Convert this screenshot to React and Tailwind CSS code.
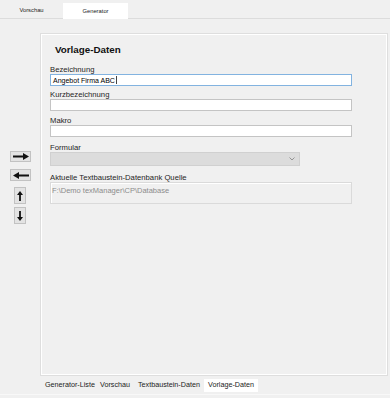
import React from 'react';

const font = { fontFamily: '"Liberation Sans", Arial, sans-serif' };

const ArrowRight = () => (
    <svg width="16" height="7" viewBox="0 0 16 7">
        <rect x="0" y="2.5" width="11" height="2" fill="#111" />
        <path d="M10 0 L16 3.5 L10 7 Z" fill="#111" />
    </svg>
);

const ArrowLeft = () => (
    <svg width="16" height="7" viewBox="0 0 16 7">
        <rect x="5" y="2.5" width="11" height="2" fill="#111" />
        <path d="M6 0 L0 3.5 L6 7 Z" fill="#111" />
    </svg>
);

const ArrowUp = () => (
    <svg width="6" height="10" viewBox="0 0 6 10">
        <rect x="2.1" y="3" width="1.8" height="7" fill="#111" />
        <path d="M0 4 L3 0 L6 4 Z" fill="#111" />
    </svg>
);

const ArrowDown = () => (
    <svg width="6" height="10" viewBox="0 0 6 10">
        <rect x="2.1" y="0" width="1.8" height="7" fill="#111" />
        <path d="M0 6 L3 10 L6 6 Z" fill="#111" />
    </svg>
);

const Label = ({ children, className = '' }) => (
    <div className={`h-[9px] leading-[9px] text-[7.7px] text-[#1e1e1e] whitespace-nowrap ${className}`}>{children}</div>
);

const TextBox = ({ value, focused }) => (
    <div className={`w-[302px] h-[12px] bg-white border flex items-center pl-[2px] text-[7px] text-black leading-none
        ${focused ? 'border-[#82b3e0]' : 'border-[#c4c4c4]'}`}>
        {value}
        {focused && <span className="inline-block w-px h-[8px] bg-[#444] ml-px" />}
    </div>
);

const App = () => {
    return (
        <div className="w-[390px] h-[398px] bg-[#f0f0f0] flex flex-col overflow-hidden" style={font}>
            {/* ── top tabs ── */}
            <div className="h-[19px] flex items-end border-b border-[#dcdcdc] shrink-0">
                <div className="w-[63px] h-[15px] flex items-center justify-center text-[5.8px] text-[#222]">Vorschau</div>
                <div className="w-[65px] h-[16px] -mb-px bg-white flex items-center justify-center text-[5.8px] text-[#222]">Generator</div>
            </div>

            {/* ── body ── */}
            <div className="flex flex-1 min-h-0">
                <div className="w-[40px] shrink-0 flex flex-col items-center pt-[132px]">
                    <button className="w-[21px] h-[11px] mr-[-1px] bg-[#e3e3e3] border border-[#c2c2c2] flex items-center justify-center">
                        <ArrowRight />
                    </button>
                    <button className="w-[21px] h-[12px] mt-[7px] mr-[-1px] bg-[#e3e3e3] border border-[#c2c2c2] flex items-center justify-center">
                        <ArrowLeft />
                    </button>
                    <button className="w-[12px] h-[17px] mt-[6px] bg-[#e3e3e3] border border-[#c2c2c2] flex items-center justify-center">
                        <ArrowUp />
                    </button>
                    <button className="w-[12px] h-[17px] mt-[3px] bg-[#e3e3e3] border border-[#c2c2c2] flex items-center justify-center">
                        <ArrowDown />
                    </button>
                </div>

                <div className="flex-1 mt-[14px] mr-[2px] mb-px border border-[#dedede] shadow-[inset_1px_1px_0_#ffffff,inset_-1px_-1px_0_#ffffff] pl-[9px] pt-[10px]">
                    <div className="h-[12px] leading-[12px] text-[9.8px] font-bold text-[#111] pl-[5px]">Vorlage-Daten</div>

                    <Label className="mt-[9px]">Bezeichnung</Label>
                    <TextBox value="Angebot Firma ABC" focused />

                    <Label className="mt-[4px]">Kurzbezeichnung</Label>
                    <TextBox />

                    <Label className="mt-[5px]">Makro</Label>
                    <TextBox />

                    <Label className="mt-[6px]">Formular</Label>
                    <div className="w-[250px] h-[14px] bg-[#dcdcdc] border border-[#d0d0d0] flex items-center justify-end pr-[4px]">
                        <svg width="6" height="4" viewBox="0 0 6 4">
                            <path d="M0.5 0.5 L3 3 L5.5 0.5" stroke="#8a8a8a" strokeWidth="0.9" fill="none" />
                        </svg>
                    </div>

                    <Label className="mt-[7px]">Aktuelle Textbaustein-Datenbank Quelle</Label>
                    <div className="w-[302px] h-[22px] border border-[#dadada] shadow-[inset_1px_1px_0_#ffffff] pl-[1px] pt-[3px] text-[7.5px] leading-[9px] text-[#8c8c8c]">
                        F:\Demo texManager\CP\Database
                    </div>
                </div>
            </div>

            {/* ── bottom tabs ── */}
            <div className="h-[17px] shrink-0 flex items-center pl-[41px] text-[7.2px] text-[#222] whitespace-nowrap">
                <div className="w-[57px] pl-[4px]">Generator-Liste</div>
                <div className="w-[37px] pl-[2px]">Vorschau</div>
                <div className="w-[69px] pl-[3px]">Textbaustein-Daten</div>
                <div className="w-[54px] h-[13px] bg-white pl-[4px] flex items-center">Vorlage-Daten</div>
            </div>
            <div className="h-[4px] shrink-0 border-t border-[#f8f8f8]" />
        </div>
    );
};

export default App;
